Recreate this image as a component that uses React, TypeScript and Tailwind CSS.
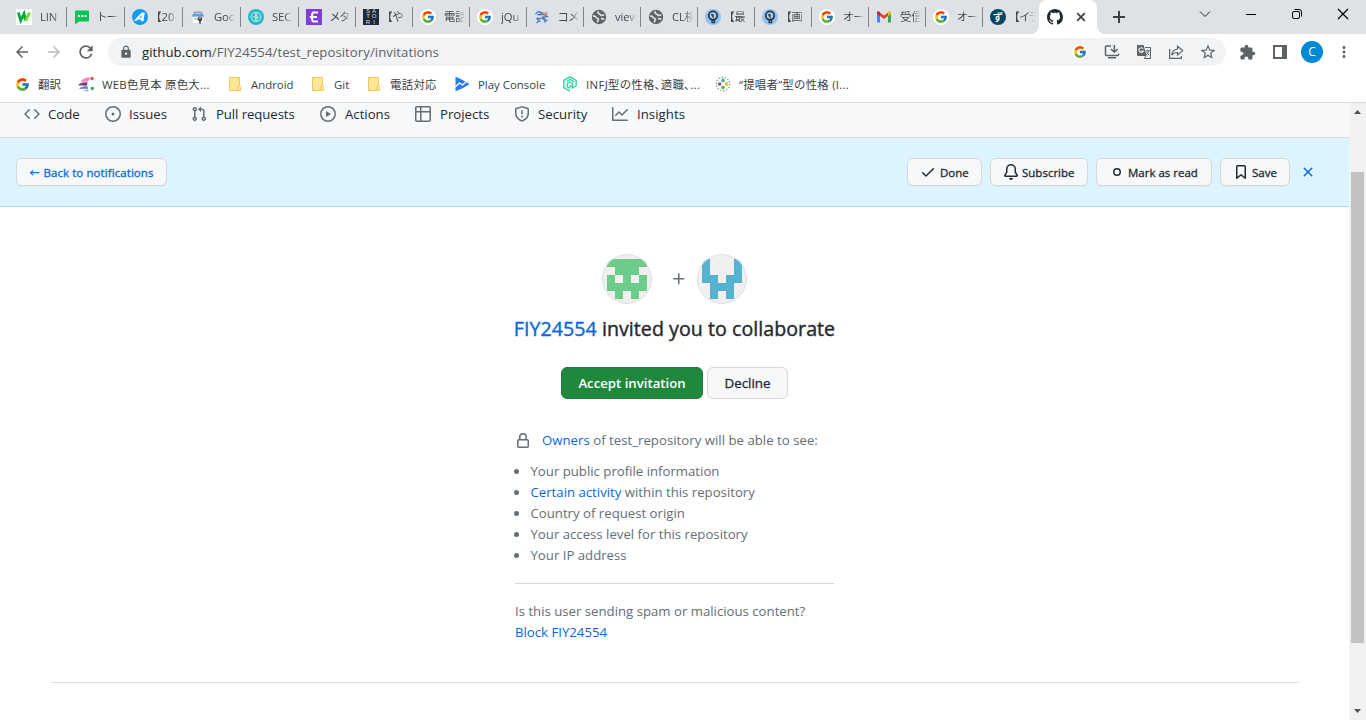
import type { ReactNode } from 'react';
import { FcGoogle } from 'react-icons/fc';
import { MdArrowBack, MdArrowForward, MdExtension, MdLock, MdMoreVert, MdRefresh, MdStarBorder } from 'react-icons/md';

const OCT = {
  code: 'm11.28 3.22 4.25 4.25a.75.75 0 0 1 0 1.06l-4.25 4.25a.749.749 0 0 1-1.275-.326.749.749 0 0 1 .215-.734L13.94 8l-3.72-3.72a.749.749 0 0 1 .326-1.275.749.749 0 0 1 .734.215Zm-6.56 0a.751.751 0 0 1 1.042.018.751.751 0 0 1 .018 1.042L2.06 8l3.72 3.72a.749.749 0 0 1-.326 1.275.749.749 0 0 1-.734-.215L.47 8.53a.75.75 0 0 1 0-1.06Z',
  issue: 'M8 9.5a1.5 1.5 0 1 0 0-3 1.5 1.5 0 0 0 0 3ZM8 0a8 8 0 1 1 0 16A8 8 0 0 1 8 0ZM1.5 8a6.5 6.5 0 1 0 13 0 6.5 6.5 0 0 0-13 0Z',
  pull: 'M1.5 3.25a2.25 2.25 0 1 1 3 2.122v5.256a2.251 2.251 0 1 1-1.5 0V5.372A2.25 2.25 0 0 1 1.5 3.25Zm5.677-.177L9.573.677A.25.25 0 0 1 10 .854V2.5h1A2.5 2.5 0 0 1 13.5 5v5.628a2.251 2.251 0 1 1-1.5 0V5a1 1 0 0 0-1-1h-1v1.646a.25.25 0 0 1-.427.177L7.177 3.427a.25.25 0 0 1 0-.354ZM3.75 2.5a.75.75 0 1 0 0 1.5.75.75 0 0 0 0-1.5Zm0 9.5a.75.75 0 1 0 0 1.5.75.75 0 0 0 0-1.5Zm8.25.75a.75.75 0 1 0 1.5 0 .75.75 0 0 0-1.5 0Z',
  play: 'M8 0a8 8 0 1 1 0 16A8 8 0 0 1 8 0ZM1.5 8a6.5 6.5 0 1 0 13 0 6.5 6.5 0 0 0-13 0Zm4.879-2.773 4.264 2.559a.25.25 0 0 1 0 .428l-4.264 2.559A.25.25 0 0 1 6 10.559V5.442a.25.25 0 0 1 .379-.215Z',
  table: 'M0 1.75C0 .784.784 0 1.75 0h12.5C15.216 0 16 .784 16 1.75v12.5A1.75 1.75 0 0 1 14.25 16H1.75A1.75 1.75 0 0 1 0 14.25ZM6.5 6.5v8h7.75a.25.25 0 0 0 .25-.25V6.5Zm8-1.5V1.75a.25.25 0 0 0-.25-.25H6.5V5Zm-13 1.5v7.75c0 .138.112.25.25.25H5v-8ZM5 5V1.5H1.75a.25.25 0 0 0-.25.25V5Z',
  shield: 'M7.467.133a1.748 1.748 0 0 1 1.066 0l5.25 1.68A1.75 1.75 0 0 1 15 3.48V7c0 1.566-.32 3.182-1.303 4.682-.983 1.498-2.585 2.813-5.032 3.855a1.697 1.697 0 0 1-1.33 0c-2.447-1.042-4.049-2.357-5.032-3.855C1.32 10.182 1 8.566 1 7V3.48a1.75 1.75 0 0 1 1.217-1.667Zm.61 1.429a.25.25 0 0 0-.153 0l-5.25 1.68a.25.25 0 0 0-.174.238V7c0 1.358.275 2.666 1.057 3.86.784 1.194 2.121 2.34 4.366 3.297a.196.196 0 0 0 .154 0c2.245-.956 3.582-2.104 4.366-3.298C13.225 9.666 13.5 8.36 13.5 7V3.48a.251.251 0 0 0-.174-.237l-5.25-1.68ZM8.75 4.75v3a.75.75 0 0 1-1.5 0v-3a.75.75 0 0 1 1.5 0ZM9 10.5a1 1 0 1 1-2 0 1 1 0 0 1 2 0Z',
  graph: 'M1.5 1.75V13.5h13.75a.75.75 0 0 1 0 1.5H.75a.75.75 0 0 1-.75-.75V1.75a.75.75 0 0 1 1.5 0Zm14.28 2.53-5.25 5.25a.75.75 0 0 1-1.06 0L7 7.06 4.28 9.78a.751.751 0 0 1-1.042-.018.751.751 0 0 1-.018-1.042l3.25-3.25a.75.75 0 0 1 1.06 0L10 7.94l4.72-4.72a.751.751 0 0 1 1.042.018.751.751 0 0 1 .018 1.042Z',
  check: 'M13.78 4.22a.75.75 0 0 1 0 1.06l-7.25 7.25a.75.75 0 0 1-1.06 0L2.22 9.28a.751.751 0 0 1 .018-1.042.751.751 0 0 1 1.042-.018L6 10.94l6.72-6.72a.75.75 0 0 1 1.06 0Z',
  bell: 'M8 16a2 2 0 0 0 1.985-1.75c.017-.137-.097-.25-.235-.25h-3.5c-.138 0-.252.113-.235.25A2 2 0 0 0 8 16ZM3 5a5 5 0 0 1 10 0v2.947c0 .05.015.098.042.139l1.703 2.555A1.519 1.519 0 0 1 13.482 13H2.518a1.516 1.516 0 0 1-1.263-2.36l1.703-2.554A.255.255 0 0 0 3 7.947Zm5-3.5A3.5 3.5 0 0 0 4.5 5v2.947c0 .346-.102.683-.294.97l-1.703 2.556a.017.017 0 0 0-.003.01l.001.006c0 .002.002.004.004.006l.006.004.007.001h10.964l.007-.001.006-.004.004-.006.001-.007a.017.017 0 0 0-.003-.01l-1.703-2.554a1.745 1.745 0 0 1-.294-.97V5A3.5 3.5 0 0 0 8 1.5Z',
  dot: 'M4 8a4 4 0 1 1 8 0 4 4 0 0 1-8 0Zm4-2.5a2.5 2.5 0 1 0 0 5 2.5 2.5 0 0 0 0-5Z',
  bookmark: 'M3 2.75C3 1.784 3.784 1 4.75 1h6.5c.966 0 1.75.784 1.75 1.75v11.5a.75.75 0 0 1-1.227.579L8 11.722l-3.773 3.107A.751.751 0 0 1 3 14.25Zm1.75-.25a.25.25 0 0 0-.25.25v9.91l3.023-2.489a.75.75 0 0 1 .954 0l3.023 2.49V2.75a.25.25 0 0 0-.25-.25Z',
  x: 'M3.72 3.72a.75.75 0 0 1 1.06 0L8 6.94l3.22-3.22a.749.749 0 0 1 1.275.326.749.749 0 0 1-.215.734L9.06 8l3.22 3.22a.749.749 0 0 1-.326 1.275.749.749 0 0 1-.734-.215L8 9.06l-3.22 3.22a.751.751 0 0 1-1.042-.018.751.751 0 0 1-.018-1.042L6.94 8 3.72 4.78a.75.75 0 0 1 0-1.06Z',
  lock: 'M4 4a4 4 0 0 1 8 0v2h.25c.966 0 1.75.784 1.75 1.75v5.5A1.75 1.75 0 0 1 12.25 15h-8.5A1.75 1.75 0 0 1 2 13.25v-5.5C2 6.784 2.784 6 3.75 6H4Zm8.25 3.5h-8.5a.25.25 0 0 0-.25.25v5.5c0 .138.112.25.25.25h8.5a.25.25 0 0 0 .25-.25v-5.5a.25.25 0 0 0-.25-.25ZM10.5 6V4a2.5 2.5 0 1 0-5 0v2Z',
  plus: 'M7.75 2a.75.75 0 0 1 .75.75V7h4.25a.75.75 0 0 1 0 1.5H8.5v4.25a.75.75 0 0 1-1.5 0V8.5H2.75a.75.75 0 0 1 0-1.5H7V2.75A.75.75 0 0 1 7.75 2Z',
  mark: 'M8 0c4.42 0 8 3.58 8 8a8.013 8.013 0 0 1-5.45 7.59c-.4.08-.55-.17-.55-.38 0-.27.01-1.13.01-2.2 0-.75-.25-1.23-.54-1.48 1.78-.2 3.65-.88 3.65-3.95 0-.88-.31-1.59-.82-2.15.08-.2.36-1.02-.08-2.12 0 0-.67-.22-2.2.82-.64-.18-1.32-.27-2-.27-.68 0-1.36.09-2 .27-1.53-1.03-2.2-.82-2.2-.82-.44 1.1-.16 1.92-.08 2.12-.51.56-.82 1.28-.82 2.15 0 3.06 1.86 3.75 3.64 3.95-.23.2-.44.55-.51 1.07-.46.21-1.61.55-2.33-.66-.15-.24-.6-.83-1.23-.82-.67.01-.27.38.01.53.34.19.73.9.82 1.13.16.45.68 1.31 2.69.94 0 .67.01 1.3.01 1.49 0 .21-.15.45-.55.38A7.995 7.995 0 0 1 0 8c0-4.42 3.58-8 8-8Z',
};

function Oct({ name, className = '' }: { name: keyof typeof OCT; className?: string }) {
  return (
    <svg viewBox="0 0 16 16" className={`size-4 shrink-0 fill-current ${className}`}>
      <path d={OCT[name]} />
    </svg>
  );
}

function Art({ children }: { children: ReactNode }) {
  return (
    <svg viewBox="0 0 16 16" fill="none" className="size-4 shrink-0">
      {children}
    </svg>
  );
}

const google = (
  <span className="flex size-4 shrink-0 items-center justify-center rounded-full bg-white">
    <FcGoogle size={14} />
  </span>
);

const globe = (
  <Art>
    <circle cx="8" cy="8" r="7.2" fill="#5f6368" />
    <path d="M2 7.2c1.6-.3 2.8.3 3.2 1.3.4.9 1.8.6 2.2 1.5.3 1-.9 1.7-1 3.4M7.6 2.3C6.5 3.8 7 4.6 8.3 4.8c1.2.2.8 1.5 2 1.6 1.2.1 1.7-.6 2.9-.2M10 9.6c1.2-.2 2.2.1 3.3.6" stroke="#dee1e6" strokeWidth="1.7" />
  </Art>
);

const bulb = (
  <Art>
    <circle cx="8" cy="8" r="8" fill="#92c3f0" />
    <circle cx="8" cy="6.6" r="4.2" fill="#a9cff2" stroke="#2c3846" strokeWidth="1.8" />
    <path d="M6.4 5.2 8 7.8V5M7 11.7h2.6v2H7z" stroke="#2c3846" strokeWidth="1.2" />
  </Art>
);

const wIcon = (
  <Art>
    <path fill="#fff" d="M0 0h16v16H0z" />
    <path d="m2.3 3.5 2.4 8L8 4.8l1.5 6.7" stroke="#06a844" strokeWidth="2.8" />
    <path d="m9.5 11.8 4.1-8.3" stroke="#6be02c" strokeWidth="2.8" />
  </Art>
);

const chat = (
  <Art>
    <path fill="#06c755" d="M2 1.5h12a1 1 0 0 1 1 1v9a1 1 0 0 1-1 1H5L1 15.5v-13a1 1 0 0 1 1-1Z" />
    <path fill="#fff" d="M4 6h2v2H4zM7.2 6h2v2h-2zM10.4 6h2v2h-2z" />
  </Art>
);

const aIcon = (
  <Art>
    <circle cx="8" cy="8" r="8" fill="#109cf1" />
    <path fill="#fff" d="M1.8 11.7 9.8 3.6h3l-1.3 8.6H8.8l.3-1.6H5.8l-1.1 1.1Zm5.5-2.9h2l.5-2.7Z" />
  </Art>
);

const store = (
  <Art>
    <path d="M4.5 4.8V3.2h7v1.6" stroke="#7c858e" />
    <path fill="#5f9de8" d="M3 4.8h10l1.2 3H1.8Z" />
    <path fill="#fafafa" d="M2.6 7.8h10.8V14H2.6z" />
    <path d="M4.3 9.8h3" stroke="#999" />
    <circle cx="10" cy="10" r="2.4" fill="#45494d" />
    <path d="M10 11v3.7" stroke="#45494d" strokeWidth="1.6" />
    <path d="M10 7.8v2" stroke="#fff" />
  </Art>
);

const brain = (
  <Art>
    <circle cx="8" cy="8" r="8" fill="#22b8c4" />
    <path d="M7.3 3v10M7 4C4.5 2.7 3.5 5 4 6.2 2.4 7 2.7 9 4 9.8c0 2 1.5 3 3 2.2M8.8 3v10M9 4c2.5-1.3 3.5 1 3 2.2 1.6.8 1.3 2.8 0 3.6 0 2-1.5 3-3 2.2M4.7 7.8H7M9 8.4h2.5" stroke="#d9f7f8" strokeWidth=".9" />
  </Art>
);

const eIcon = (
  <Art>
    <path fill="#823bdc" d="M0 0h16v16H0z" />
    <path d="M12 3.5H7.2c-1.6 0-1.6 9 0 9H12M3.8 8H11" stroke="#fff" strokeWidth="2.1" />
  </Art>
);

const satori = (
  <span className="grid size-4 shrink-0 grid-cols-2 bg-[#1c2a3b] px-[2px] text-center font-['Liberation_Sans',sans-serif] text-[6px] leading-[5.3px] text-[#dde1e6]">
    <span>S</span><span>A</span><span>T</span><span>O</span><span>R</span><span>I</span>
  </span>
);

const sketch = (
  <Art>
    <path fill="#d6e2f1" d="M0 0h16v16H0z" />
    <path d="M9 3h5v3H9z" fill="#f1a184" />
    <path d="m1.5 5 3-2.5 4 1.5-5 2 7-.5 3 2-5 .5 2.5 3-4-2-4 1 2.5 1.5-3 2.5M10 13l3.5-2M3 8.5 6.5 13M11 7.5v6" stroke="#4e71a5" strokeWidth="1.1" />
  </Art>
);

const gmail = (
  <Art>
    <path fill="#4285f4" d="M1 3.6v8.8c0 .6.4 1 1 1h2V6.6Z" />
    <path fill="#34a853" d="M15 3.6v8.8c0 .6-.4 1-1 1h-2V6.6Z" />
    <path d="M2.2 3.8 8 8.3l5.8-4.5" stroke="#ea4335" strokeWidth="2.8" />
    <path fill="#c5221f" d="M1 3.4c0-1 1-1.4 1.8-.9L4 3.4v3.7L1 5Z" />
    <path fill="#fbbc04" d="M15 3.4c0-1-1-1.4-1.8-.9l-1.2.9v3.7L15 5Z" />
  </Art>
);

const zu = (
  <span className="flex size-4 shrink-0 items-center justify-center rounded-full bg-[#06475f] font-['Noto_Sans_CJK_JP',sans-serif] text-[10px] leading-none font-bold text-white">ず</span>
);

const TABS: [ReactNode, string][] = [
  [wIcon, 'LIN'],
  [chat, 'トーク'],
  [aIcon, '【20'],
  [store, 'Goo'],
  [brain, 'SEC'],
  [eIcon, 'メタ'],
  [satori, '【や'],
  [google, '電話'],
  [google, 'jQu'],
  [sketch, 'コメ'],
  [globe, 'view'],
  [globe, 'CL検'],
  [bulb, '【最'],
  [bulb, '【画'],
  [google, 'オー'],
  [gmail, '受信'],
  [google, 'オー'],
  [zu, '【イラ'],
];

const tabWidth = (i: number) => (i < 5 ? 'w-[58px]' : i < 17 ? 'w-[57px]' : 'w-[56px]');

function TabStrip() {
  return (
    <div className="flex h-[34px] shrink-0 bg-[#dee1e6] pl-[9px] text-[#45494d]">
      {TABS.map(([icon, label], i) => (
        <div key={i} className={`flex h-full shrink-0 items-center pl-[7px] ${tabWidth(i)}`}>
          {icon}
          <span className="ml-2 w-[21px] overflow-hidden mask-r-from-60% text-[11.3px] leading-4 tracking-[-0.1px] whitespace-nowrap [font-feature-settings:'palt']">{label}</span>
          <span className={`ml-auto h-5 w-px ${i < 17 ? 'bg-[#808387]' : ''}`} />
        </div>
      ))}
      <div className="relative flex w-[58px] shrink-0 items-center rounded-t-lg bg-white pl-2">
        <svg viewBox="0 0 8 8" className="absolute bottom-0 -left-2 size-2"><path fill="#fff" d="M8 0v8H0a8 8 0 0 0 8-8Z" /></svg>
        <svg viewBox="0 0 8 8" className="absolute -right-2 bottom-0 size-2"><path fill="#fff" d="M0 0v8h8a8 8 0 0 1-8-8Z" /></svg>
        <Oct name="mark" className="text-[#24292f]" />
        <svg viewBox="0 0 16 16" className="ml-[10px] size-4 stroke-[#3c4043] stroke-[1.7]"><path d="m4.2 4.2 7.6 7.6m0-7.6-7.6 7.6" /></svg>
      </div>
      <svg viewBox="0 0 16 16" className="mt-[9px] ml-[14px] size-4 shrink-0 stroke-[#3c4043] stroke-2"><path d="M8 2v12M2 8h12" /></svg>
      <svg viewBox="0 0 16 16" fill="none" className="mt-[6px] ml-[70px] size-4 shrink-0 stroke-[#202124]"><path d="m3 5.5 5 5 5-5" /></svg>
      <svg viewBox="0 0 16 16" className="mt-[6px] ml-[30px] size-4 shrink-0 stroke-black"><path d="M3 8.5h10" /></svg>
      <svg viewBox="0 0 16 16" fill="none" className="mt-[6px] ml-[30px] size-4 shrink-0 stroke-black"><rect x="3.5" y="5.5" width="7" height="7" rx="1.5" /><path d="M5.5 3.5h4.5a2.5 2.5 0 0 1 2.5 2.5v4.5" /></svg>
      <svg viewBox="0 0 16 16" className="mt-[6px] ml-[30px] size-4 shrink-0 stroke-black stroke-[1.2]"><path d="m3 3 10 10m0-10L3 13" /></svg>
    </div>
  );
}

function Toolbar() {
  return (
    <div className="flex h-9 shrink-0 items-center pl-[13px] text-[#5f6368]">
      <MdArrowBack size={18} />
      <MdArrowForward size={18} className="ml-[14px] text-[#babcbe]" />
      <MdRefresh size={20} className="ml-[13px] shrink-0" />
      <div className="ml-3 flex h-7 w-[1118px] shrink-0 items-center rounded-full bg-[#f1f3f4] pl-[11px]">
        <MdLock size={14} />
        <span className="ml-[9px] w-[300px] pt-px text-[13.2px] tracking-[0.04px] whitespace-nowrap">
          <span className="text-[#202124]">github.com</span>/FIY24554/test_repository/invitations
        </span>
        <div className="ml-auto flex items-center gap-4 pr-[10px]">
          {google}
          <svg viewBox="0 0 16 16" fill="none" className="size-4 stroke-[#5f6368] stroke-[1.5]"><path d="M7 2H2.2a.7.7 0 0 0-.7.7v8.1c0 .4.3.7.7.7h11.6c.4 0 .7-.3.7-.7V9.5M10.3 1v7M7 5l3.3 3.3L13.6 5M4 13.8h8" /></svg>
          <svg viewBox="0 0 16 16" fill="none" className="size-4"><path fill="#5f6368" d="M1 1h6.5l3.2 11H2a1 1 0 0 1-1-1Z" /><path d="M7.2 4.8A2.3 2.3 0 1 0 7.4 7H5.3" stroke="#f1f3f4" strokeWidth="1.1" /><path d="M9 3.5h5.5v11H8.2l2-2.5M9.7 6.8h4M11.6 5.8v1M12.8 7c-.4 1.7-1.5 2.8-2.6 3.5M10.5 8.2l2.6 3" stroke="#5f6368" /></svg>
          <svg viewBox="0 0 16 16" fill="none" className="size-4 stroke-[#5f6368] stroke-[1.2]"><path d="M1.6 5v9.4h11.8V12M9.5 2.2l5.2 4.4-5.2 4.3V8.5c-2.8 0-4.5.8-5.8 2.6.4-3 2.2-5.5 5.8-6.1Z" /></svg>
          <MdStarBorder size={18} className="-mx-px" />
        </div>
      </div>
      <MdExtension size={17} className="ml-[13px] shrink-0" />
      <svg viewBox="0 0 16 16" fill="none" className="ml-[16px] size-4 shrink-0 stroke-[#5f6368] stroke-2"><path d="M2 2h12v12H2z" /><path d="M10 1h5v14h-5z" fill="#5f6368" stroke="none" /></svg>
      <span className="ml-[13px] flex size-[22px] shrink-0 items-center justify-center rounded-full bg-[#0288d1] text-[12px] text-white">C</span>
      <MdMoreVert size={18} className="ml-[12px] shrink-0" />
    </div>
  );
}

const folder = (
  <Art>
    <path d="M2.5 1.5h10v13h-10z" fill="#ffe694" stroke="#ecc95c" />
    <path d="M12 9.5c1 0 1.7 1 1.7 2v3h-3v-3c0-1 .3-2 1.3-2Z" fill="#ffe694" stroke="#ecc95c" />
  </Art>
);

const palette = (
  <Art>
    <path d="M2.5 6C4.500 3 7 1.600 11.500 1.300 11.500 3.500 11 4.800 9.500 5.600Z" fill="#f583c0" />
    <path d="M0 9.2c2.500-2.500 5.500-3.200 9.500-2.700 0 1.800-.5 2.800-1.500 3.300Z" fill="#76407a" />
    <path d="M1 13c2-2.300 4.500-3 8.500-2.600.5 1 .5 2 0 2.800C7 12.300 4.500 12.800 1 13Z" fill="#5a83b8" />
    <path d="M5 14.800c2-1.300 4-1.400 6-.8L10 15.500Z" fill="#83b5df" />
    <circle cx="14" cy="2.5" r="1.8" fill="#ef5050" />
    <circle cx="14.3" cy="12.5" r="1.8" fill="#45aa66" />
  </Art>
);

const playConsole = (
  <Art>
    <path fill="#2c7bf0" d="M1.5.8c4 1.6 9 4 13 6.5a.8.8 0 0 1 0 1.4c-4 2.8-9 5.1-13 6.6Z" />
    <path d="m1 11 4.5-4 3 2 6-5.5" stroke="#fff" strokeWidth="1.3" />
  </Art>
);

const hex = (
  <Art>
    <path d="M8 15.2 1.8 11.7V4.3L8 .8l6.2 3.5v5.2L10.5 12V7.5L8 6 5.3 7.5v3.3L8 12.3M4.5 5.5l3.500-2 4.500 2.500" stroke="#2bd9a4" strokeWidth="1.4" />
    <path d="m7.5 8.5 3 1.8-3 1.8z" fill="#2bd9a4" />
  </Art>
);

const dots = (
  <Art>
    <circle cx="8" cy="8" r="6.7" stroke="#7da189" strokeWidth="1.2" strokeDasharray="1.5 1.5" />
    <circle cx="8" cy="4.5" r="1.9" fill="#4cb3ad" />
    <circle cx="4.7" cy="8" r="1.8" fill="#865574" />
    <circle cx="11.5" cy="8" r="1.9" fill="#e7cb36" />
    <circle cx="8" cy="11.5" r="1.8" fill="#68a357" />
  </Art>
);

const BOOKMARKS: [ReactNode, string, string][] = [
  [<FcGoogle size={15} className="shrink-0" />, '翻訳', 'w-[63px]'],
  [palette, 'WEB色見本 原色大...', 'w-[149px] tracking-[0.25px]'],
  [folder, 'Android', 'w-[83px]'],
  [folder, 'Git', 'w-[56px]'],
  [folder, '電話対応', 'w-[88px] tracking-[0.3px]'],
  [playConsole, 'Play Console', 'w-[108px]'],
  [hex, 'INFJ型の性格、適職、...', "w-[153px] tracking-[0.35px] [font-feature-settings:'palt']"],
  [dots, '“提唱者”型の性格 (I...', 'w-[150px] tracking-[0.25px]'],
];

function Bookmarks() {
  return (
    <div className="flex h-[33px] shrink-0 items-center border-b border-[#dadce0] pb-[3px] pl-[15px] text-[11.4px] text-[#3c4043]">
      {BOOKMARKS.map(([icon, label, look]) => (
        <div key={label} className={`flex shrink-0 items-center gap-2 whitespace-nowrap ${look}`}>
          {icon}
          <span>{label}</span>
        </div>
      ))}
    </div>
  );
}

const NAV: [keyof typeof OCT, string, string][] = [
  ['code', 'Code', 'w-[81px] gap-2'],
  ['issue', 'Issues', 'w-[86px] gap-2'],
  ['pull', 'Pull requests', 'w-[129px] gap-[9px] tracking-[-0.08px]'],
  ['play', 'Actions', 'w-[95px] gap-[9px]'],
  ['table', 'Projects', 'w-[99px] gap-[9px]'],
  ['shield', 'Security', 'w-[98px] gap-2 tracking-[0.05px]'],
  ['graph', 'Insights', 'w-[90px] gap-[9px] tracking-[0.05px]'],
];

const smallButton =
  'flex h-7 items-center rounded-md border border-[#d5d8da] bg-[#f6f8fa] text-[11.5px] whitespace-nowrap shadow-[0_1px_0_rgba(27,31,36,0.04)] [-webkit-text-stroke:0.3px_currentColor]';

function ShelfButton({ icon, label, look }: { icon: keyof typeof OCT; label: string; look: string }) {
  return (
    <button className={`${smallButton} pl-3 text-[#24292f] ${look}`}>
      <Oct name={icon} />
      <span className="pt-0.5">{label}</span>
    </button>
  );
}

const GREEN_BLOCKS = ['11111', '01110', '10101', '11111', '01010'];
const BLUE_BLOCKS = ['10001', '10001', '11011', '01110', '01010'];

function Avatar({ blocks, color }: { blocks: string[]; color: string }) {
  return (
    <svg viewBox="0 0 50 50" className="size-[50px] rounded-full">
      <circle cx="25" cy="25" r="25" fill="#f0f0f0" />
      <g fill={color} shapeRendering="crispEdges">
        {blocks.flatMap((row, y) =>
          [...row].map((c, x) => (c === '1' ? <rect key={`${x}-${y}`} x={4.7 + x * 8.1} y={4.7 + y * 8.1} width="8.1" height="8.1" /> : null)),
        )}
      </g>
      <circle cx="25" cy="25" r="24.5" fill="none" stroke="#dcdddf" />
    </svg>
  );
}

function Scrollbar() {
  return (
    <div className="flex w-[17px] shrink-0 flex-col items-center bg-[#f1f1f1]">
      <svg viewBox="0 0 17 17" className="size-[17px] shrink-0"><path fill="#505050" d="M5 11h7L8.5 7Z" /></svg>
      <div className="mt-[52px] h-[471px] w-[13px] bg-[#c1c1c1]" />
      <svg viewBox="0 0 17 17" className="mt-auto size-[17px] shrink-0"><path fill="#505050" d="M5 6h7l-3.5 4Z" /></svg>
    </div>
  );
}

function Item({ children }: { children: ReactNode }) {
  return (
    <li className="flex h-[21px] items-center">
      <span className="mr-[11.5px] -ml-px size-[5px] rounded-full bg-[#656d76]" />
      <span>{children}</span>
    </li>
  );
}

function Page() {
  return (
    <main className="flex min-w-0 flex-1 flex-col">
      <nav className="flex h-[35px] shrink-0 border-b border-[#d8dee4] bg-[#f6f8fa] pt-[3px] pl-6 text-[13.2px] text-[#24292f]">
        {NAV.map(([icon, label, look]) => (
          <a key={label} className={`flex h-4 shrink-0 items-center whitespace-nowrap ${look}`}>
            <Oct name={icon} className="text-[#656d76]" />
            <span className="pt-0.5">{label}</span>
          </a>
        ))}
      </nav>
      <div className="flex h-[69px] shrink-0 items-center border-b border-[#a9d9fb] bg-[#ddf4ff] pr-[33px] pl-4">
        <button className={`${smallButton} w-[151px] justify-center gap-1 text-[#0969da]`}>
          <span className="pt-0.5 text-[10px]">←</span>
          <span className="pt-0.5 tracking-[0.08px]">Back to notifications</span>
        </button>
        <div className="ml-auto flex items-center gap-2">
          <ShelfButton icon="check" label="Done" look="w-[75px] gap-1" />
          <ShelfButton icon="bell" label="Subscribe" look="w-[98px] gap-[3px]" />
          <ShelfButton icon="dot" label="Mark as read" look="w-[116px] gap-[3px]" />
          <ShelfButton icon="bookmark" label="Save" look="w-[70px] gap-[3px]" />
          <Oct name="x" className="ml-0.5 text-[#0969da]" />
        </div>
      </div>
      <section className="mt-[47px] mr-auto ml-[515px] flex w-[319px] flex-col text-[13.2px] leading-[21px] text-[#656d76]">
        <div className="flex items-center justify-center">
          <Avatar blocks={GREEN_BLOCKS} color="#6dcc8a" />
          <Oct name="plus" className="mr-[10px] ml-[19px]" />
          <Avatar blocks={BLUE_BLOCKS} color="#56b3d1" />
        </div>
        <h1 className="-mx-4 mt-[10px] text-center text-[19.6px] leading-[30px] tracking-[0.05px] whitespace-nowrap text-[#24292f] [-webkit-text-stroke:0.4px_currentColor]">
          <a className="text-[#0969da]">FIY24554</a> invited you to collaborate
        </h1>
        <div className="mt-[23px] flex justify-center gap-1">
          <button className="h-8 w-[142px] rounded-md border border-[#1f7f39] bg-[#1f883d] font-semibold whitespace-nowrap text-white">Accept invitation</button>
          <button className="h-8 w-[81px] rounded-md border border-[#d5d8da] bg-[#f6f8fa] text-[13.4px] text-[#24292f] [-webkit-text-stroke:0.3px_currentColor]">Decline</button>
        </div>
        <p className="mt-[31px] flex items-center whitespace-nowrap">
          <Oct name="lock" className="mr-[11px]" />
          <span className="tracking-[0.02px]"><a className="text-[#0969da]">Owners</a> of test_repository will be able to see:</span>
        </p>
        <ul className="mt-[10px] whitespace-nowrap">
          <Item>Your public profile information</Item>
          <Item><a className="text-[#0969da]">Certain activity</a> within this repository</Item>
          <Item>Country of request origin</Item>
          <Item>Your access level for this repository</Item>
          <Item>Your IP address</Item>
        </ul>
        <hr className="mt-[17px] border-[#d0d7de]" />
        <p className="mt-[17px] whitespace-nowrap">Is this user sending spam or malicious content?</p>
        <a className="text-[#0969da]">Block FIY24554</a>
      </section>
      <hr className="mt-[39px] mr-[50px] ml-[51px] border-[#d8dee4]" />
    </main>
  );
}

export default function App() {
  return (
    <div className="flex h-[720px] w-[1366px] flex-col overflow-hidden bg-white font-['Open_Sans','Noto_Sans_CJK_JP',sans-serif]">
      <TabStrip />
      <Toolbar />
      <Bookmarks />
      <div className="flex min-h-0 flex-1">
        <Page />
        <Scrollbar />
      </div>
    </div>
  );
}
